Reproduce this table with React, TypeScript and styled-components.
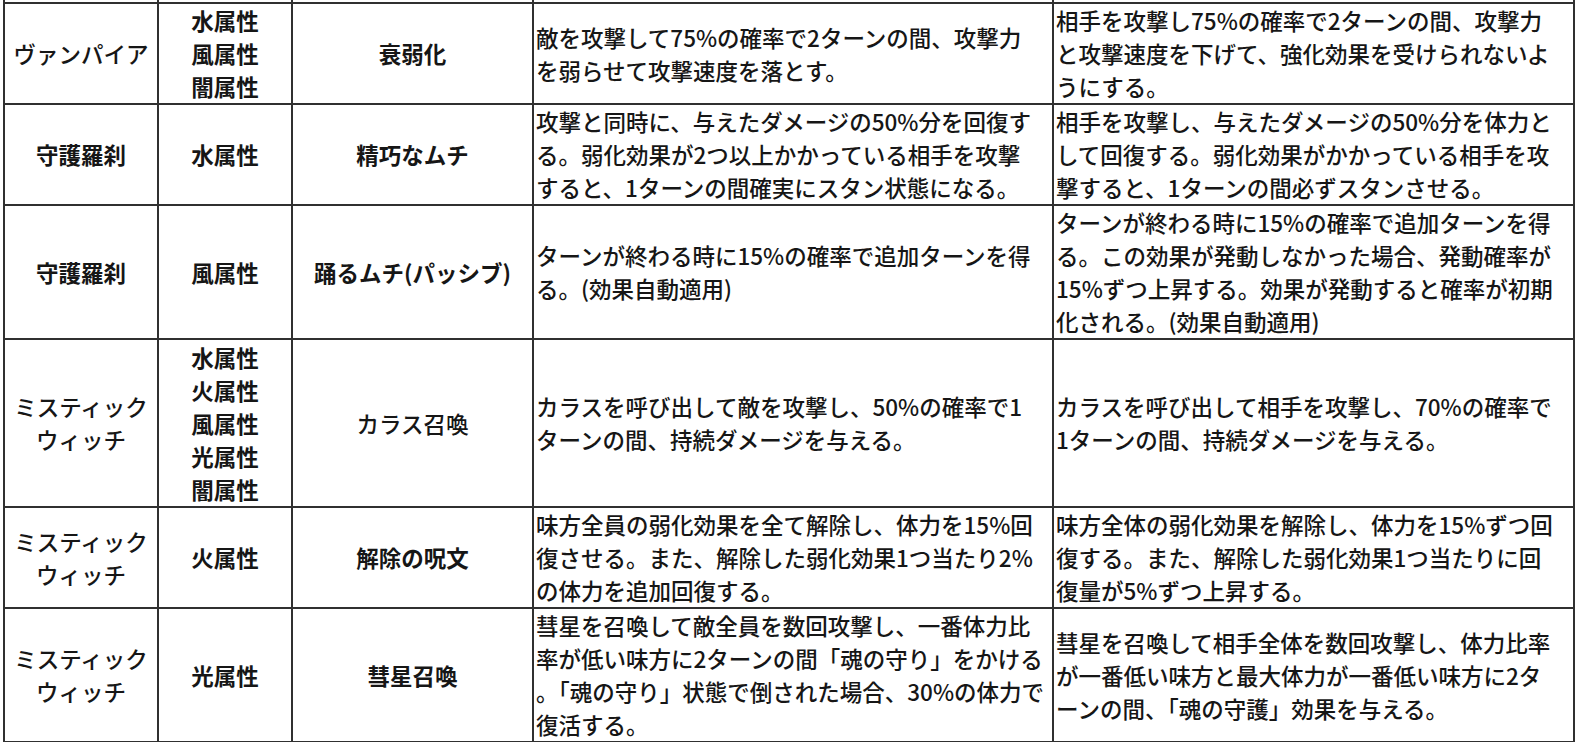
import React from "react";
import styled, { createGlobalStyle } from "styled-components";

const Global = createGlobalStyle`
  html, body { margin: 0; padding: 0; background: #ffffff; }
  body {
    font-family: "Noto Sans CJK JP", "Noto Sans", sans-serif;
    color: #161616;
    overflow: hidden;
  }
`;

const Page = styled.div`
  padding-left: 3px;
  width: 1575px;
  height: 742px;
  overflow: hidden;
  box-sizing: border-box;
`;

const Table = styled.table`
  border-collapse: collapse;
  table-layout: fixed;
  width: 1570px;
`;

const Row = styled.tr<{ $h: number }>`
  height: ${(p) => p.$h}px;
`;

const Cell = styled.td<{ $align?: "center" | "left"; $bold?: boolean }>`
  border: 2px solid #303030;
  padding: 0 2px;
  vertical-align: middle;
  text-align: ${(p) => p.$align ?? "center"};
  font-size: 22.5px;
  line-height: 33px;
  font-weight: ${(p) => (p.$bold ? 700 : 500)};
  white-space: nowrap;
  overflow: hidden;
`;

const Line = styled.span`
  display: block;
`;

const EmptyCell = styled.td<{ $top?: boolean }>`
  border: 2px solid #303030;
  ${(p) => (p.$top ? "border-top: none;" : "")}
  padding: 0;
  font-size: 0;
  line-height: 0;
`;

type RowData = {
  h: number;
  name: string[];
  nameBold: boolean;
  attrs: string[];
  skill: string;
  skillBold: boolean;
  before: string[];
  after: string[];
};

const rows: RowData[] = [
  {
    h: 100,
    name: ["ヴァンパイア"],
    nameBold: false,
    attrs: ["水属性", "風属性", "闇属性"],
    skill: "衰弱化",
    skillBold: true,
    before: ["敵を攻撃して75%の確率で2ターンの間、攻撃力", "を弱らせて攻撃速度を落とす。"],
    after: [
      "相手を攻撃し75%の確率で2ターンの間、攻撃力",
      "と攻撃速度を下げて、強化効果を受けられないよ",
      "うにする。",
    ],
  },
  {
    h: 100,
    name: ["守護羅刹"],
    nameBold: true,
    attrs: ["水属性"],
    skill: "精巧なムチ",
    skillBold: true,
    before: [
      "攻撃と同時に、与えたダメージの50%分を回復す",
      "る。弱化効果が2つ以上かかっている相手を攻撃",
      "すると、1ターンの間確実にスタン状態になる。",
    ],
    after: [
      "相手を攻撃し、与えたダメージの50%分を体力と",
      "して回復する。弱化効果がかかっている相手を攻",
      "撃すると、1ターンの間必ずスタンさせる。",
    ],
  },
  {
    h: 134,
    name: ["守護羅刹"],
    nameBold: true,
    attrs: ["風属性"],
    skill: "踊るムチ(パッシブ)",
    skillBold: true,
    before: ["ターンが終わる時に15%の確率で追加ターンを得", "る。(効果自動適用)"],
    after: [
      "ターンが終わる時に15%の確率で追加ターンを得",
      "る。この効果が発動しなかった場合、発動確率が",
      "15%ずつ上昇する。効果が発動すると確率が初期",
      "化される。(効果自動適用)",
    ],
  },
  {
    h: 168,
    name: ["ミスティック", "ウィッチ"],
    nameBold: false,
    attrs: ["水属性", "火属性", "風属性", "光属性", "闇属性"],
    skill: "カラス召喚",
    skillBold: false,
    before: ["カラスを呼び出して敵を攻撃し、50%の確率で1", "ターンの間、持続ダメージを与える。"],
    after: ["カラスを呼び出して相手を攻撃し、70%の確率で", "1ターンの間、持続ダメージを与える。"],
  },
  {
    h: 100,
    name: ["ミスティック", "ウィッチ"],
    nameBold: false,
    attrs: ["火属性"],
    skill: "解除の呪文",
    skillBold: true,
    before: [
      "味方全員の弱化効果を全て解除し、体力を15%回",
      "復させる。また、解除した弱化効果1つ当たり2%",
      "の体力を追加回復する。",
    ],
    after: [
      "味方全体の弱化効果を解除し、体力を15%ずつ回",
      "復する。また、解除した弱化効果1つ当たりに回",
      "復量が5%ずつ上昇する。",
    ],
  },
  {
    h: 134,
    name: ["ミスティック", "ウィッチ"],
    nameBold: false,
    attrs: ["光属性"],
    skill: "彗星召喚",
    skillBold: true,
    before: [
      "彗星を召喚して敵全員を数回攻撃し、一番体力比",
      "率が低い味方に2ターンの間「魂の守り」をかける",
      "。「魂の守り」状態で倒された場合、30%の体力で",
      "復活する。",
    ],
    after: [
      "彗星を召喚して相手全体を数回攻撃し、体力比率",
      "が一番低い味方と最大体力が一番低い味方に2タ",
      "ーンの間、「魂の守護」効果を与える。",
    ],
  },
];

const Lines = ({ items }: { items: string[] }) => (
  <>
    {items.map((t, i) => (
      <Line key={i}>{t}</Line>
    ))}
  </>
);

export default function App() {
  return (
    <Page>
      <Global />
      <Table>
        <colgroup>
          <col style={{ width: 154 }} />
          <col style={{ width: 134 }} />
          <col style={{ width: 241 }} />
          <col style={{ width: 520 }} />
          <col style={{ width: 521 }} />
        </colgroup>
        <tbody>
          <Row $h={3}>
            <EmptyCell $top />
            <EmptyCell $top />
            <EmptyCell $top />
            <EmptyCell $top />
            <EmptyCell $top />
          </Row>
          {rows.map((r, i) => (
            <Row key={i} $h={r.h}>
              <Cell $bold={r.nameBold}>
                <Lines items={r.name} />
              </Cell>
              <Cell $bold>
                <Lines items={r.attrs} />
              </Cell>
              <Cell $bold={r.skillBold}>{r.skill}</Cell>
              <Cell $align="left">
                <Lines items={r.before} />
              </Cell>
              <Cell $align="left">
                <Lines items={r.after} />
              </Cell>
            </Row>
          ))}
          <Row $h={34}>
            <EmptyCell />
            <EmptyCell />
            <EmptyCell />
            <EmptyCell />
            <EmptyCell />
          </Row>
        </tbody>
      </Table>
    </Page>
  );
}
